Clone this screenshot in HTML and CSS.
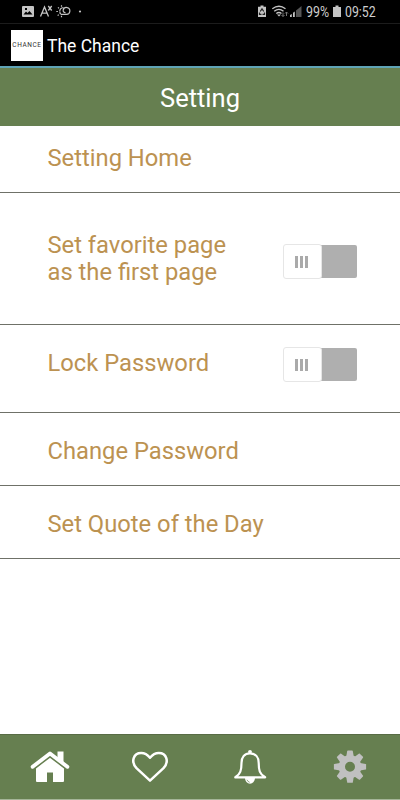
FILE: index.html
```html
<!DOCTYPE html>
<html lang="en">
<head>
<meta charset="utf-8">
<title>The Chance</title>
<link rel="stylesheet" href="styles.css">
</head>
<body>
<div class="status">
  <svg class="status-left" width="70" height="23" viewBox="0 0 70 23">
    <path fill="#c4c4c4" fill-rule="evenodd" d="M1 6h10q1 0 1 1v9q0 1-1 1H1q-1 0-1-1V7q0-1 1-1zM1.500 14.500h9L7.500 11 5.500 13 4 11.500zM3 8v2h2V8z"/>
    <path fill="none" stroke="#c4c4c4" stroke-width="1.300" d="M18.500 16.500L22.500 7l4 9.500M20 13.200h5M26.300 6l3.400 4.500M29.700 6l-3.400 4.500"/>
    <path fill="none" stroke="#c4c4c4" stroke-width="1.200" d="M41.500 7.800a3.200 3.200 0 0 0-3.700 3.500M39 14.300h5.500a3.400 3.400 0 1 0-3.300-4.300q-.4 2.500 2.300 2.600M39 14.300q-1.500-.8-1-2.600"/>
    <path fill="none" stroke="#c4c4c4" stroke-width="1.200" d="M34.300 11.500h1.600M36 7.300l1 1M39.500 5.300v1.400M35.700 15.700l1-1M39.500 15.800v1.400"/>
    <circle cx="58" cy="11.500" r="1.100" fill="#c4c4c4"/>
  </svg>
  <div class="status-right">
    <svg width="46" height="23" viewBox="0 0 46 23">
      <path fill="#c4c4c4" d="M2.500 5.500h3v1.300h2.500v10.200H0V6.800h2.500z"/>
      <path fill="none" stroke="#222" stroke-width="1.200" d="M2.200 11.500L4 8.800l1.800 2.700M1.500 12.500v1.800h2M6.500 12.500v1.800h-2"/>
      <path fill="none" stroke="#c4c4c4" stroke-width="1.400" d="M14.300 8.700q6.700-5 13.200 0M16.200 11.200q4.700-3.600 9.300 0M18.300 13.500q2.600-2 5.200 0"/>
      <path fill="#c4c4c4" d="M19 14.500h4L21 16.500z"/>
      <path fill="none" stroke="#777" stroke-width="1" d="M25 12.500v4M23.500 15l1.500 1.500 1.500-1.500M28.500 16v-4M27 13.500l1.500-1.500 1.500 1.500"/>
      <path fill="#c4c4c4" d="M32 17v-2l1.800-1v3zM35 17v-4.300l1.800-1.200V17z"/>
      <path fill="#555" d="M38 17V10.500l2.500-2V17zM40.500 17V8.500L43.500 6v11z"/>
    </svg>
    <span class="percent">99%</span>
    <svg width="8" height="23" viewBox="0 0 8 23"><path fill="#c4c4c4" d="M2.500 5.500h3V7H8v10H0V7h2.500z"/></svg>
    <span class="time">09:52</span>
  </div>
</div>
<div class="appbar">
  <div class="logo"><span>CHANCE</span></div>
  <span class="app-name">The Chance</span>
</div>
<header class="title"><span>Setting</span></header>
<main class="list">
  <div class="row home"><span class="label">Setting Home</span></div>
  <div class="row favorite"><span class="label">Set favorite page<br>as the first page</span><div class="switch"><div class="thumb"><i></i><i></i><i></i></div></div></div>
  <div class="row lock"><span class="label">Lock Password</span><div class="switch"><div class="thumb"><i></i><i></i><i></i></div></div></div>
  <div class="row change"><span class="label">Change Password</span></div>
  <div class="row quote"><span class="label">Set Quote of the Day</span></div>
</main>
<nav class="nav">
  <svg width="50" height="40" viewBox="0 0 50 40">
    <path fill="#fff" d="M25 10.500l14 11.500v13q0 1-1 1H28V26.500h-6V36H12q-1 0-1-1V22z"/>
    <path fill="none" stroke="#667f50" stroke-width="6" d="M6 22.500L25 8 44 22.500"/>
    <path fill="#fff" d="M32.500 5.500h6V17l-6-5z"/>
    <path fill="none" stroke="#fff" stroke-width="3.800" stroke-linecap="round" stroke-linejoin="round" d="M7.600 20.800L25 7.500l17.400 13.300"/>
  </svg>
  <svg width="50" height="40" viewBox="0 0 50 40"><path fill="none" stroke="#fff" stroke-width="2.500" stroke-linejoin="round" d="M25 34.600L11.500 22.200C5.500 15.500 8.500 7 16.200 7c4.800 0 7 2.500 8.800 4.700C26.800 9.500 29 7 33.800 7c7.700 0 10.700 8.500 4.700 15.200z"/></svg>
  <svg width="50" height="40" viewBox="0 0 50 40">
    <circle cx="25" cy="5.800" r="1.900" fill="#fff"/>
    <path fill="none" stroke="#fff" stroke-width="2.200" stroke-linejoin="round" d="M25 7.300c-5.500 0-8.500 4-8.500 9.700 0 7-1 11-6.200 14.300h29.900C34.500 28 33.700 24 33.700 17c0-5.700-3.200-9.700-8.700-9.700z"/>
    <path fill="#fff" d="M20 32h10a5 5.700 0 0 1-10 0z"/>
    <path fill="none" stroke="#667f50" stroke-width=".7" d="M22 33.800q.7 2 2.700 2.500"/>
  </svg>
  <svg width="50" height="40" viewBox="0 0 50 40">
    <g fill="#c0c0c0">
      <path id="tooth" d="M21 12l1.200-7q.1-.4.600-.4h4.400q.5 0 .6.400l1.200 7z"/>
      <use href="#tooth" transform="rotate(45 25 20.700)"/><use href="#tooth" transform="rotate(90 25 20.700)"/><use href="#tooth" transform="rotate(135 25 20.700)"/><use href="#tooth" transform="rotate(180 25 20.700)"/><use href="#tooth" transform="rotate(225 25 20.700)"/><use href="#tooth" transform="rotate(270 25 20.700)"/><use href="#tooth" transform="rotate(315 25 20.700)"/>
    </g>
    <circle cx="25" cy="20.700" r="8.200" fill="none" stroke="#c0c0c0" stroke-width="6.400"/>
  </svg>
</nav>
</body>
</html>
```
FILE: styles.css
```css
* { box-sizing: border-box; }
body {
  margin: 0;
  height: 800px;
  display: flex;
  flex-direction: column;
  overflow: hidden;
  background: #fff;
  font-family: Roboto, sans-serif;
}
svg { display: block; flex: none; }
.status {
  height: 24px;
  display: flex;
  justify-content: space-between;
  background: #000;
  border-bottom: 1px solid #1c1c1c;
  padding: 0 24px 0 22px;
}
.status-right {
  display: flex;
  color: #cfcfcf;
  font-size: 14px;
  line-height: 25px;
  white-space: nowrap;
}
.percent { width: 23px; margin: 0 4px 0 2px; transform: scaleX(.89); transform-origin: left; }
.time { width: 31px; margin-left: 4px; transform: scaleX(.88); transform-origin: left; }
.appbar {
  height: 44px;
  display: flex;
  align-items: center;
  gap: 4px;
  padding-left: 11px;
  background: #000;
  border-bottom: 2px solid #5fa3b5;
}
.logo {
  width: 32px;
  height: 31px;
  display: flex;
  align-items: center;
  justify-content: center;
  background: #fff;
  color: #333;
  font-size: 6.500px;
  letter-spacing: .6px;
}
.app-name { color: #fff; font-size: 17.500px; line-height: 22px; padding-top: 2px; white-space: nowrap; }
.title {
  height: 58px;
  display: flex;
  align-items: center;
  justify-content: center;
  padding-top: 2px;
  background: #667f50;
  color: #fff;
  font-size: 25.500px;
  line-height: 30px;
}
.list { flex: 1; }
.row {
  display: flex;
  justify-content: space-between;
  align-items: flex-start;
  padding: 0 43px 0 47.500px;
  border-bottom: 1px solid #6f7168;
}
.label {
  color: #bc9251;
  font-size: 23.750px;
  line-height: 27px;
  white-space: nowrap;
}
.home { height: 67px; padding-top: 19px; }
.favorite { height: 132px; padding-top: 39px; }
.lock { height: 88px; padding-top: 25px; }
.change { height: 73px; padding-top: 25px; }
.quote { height: 73px; padding-top: 25px; }
.switch {
  width: 74px;
  height: 33px;
  margin-top: 13px;
  border-radius: 2px;
  background: linear-gradient(90deg, #fff 35px, #afafaf 35px);
}
.lock .switch { margin-top: -2px; }
.thumb {
  width: 39px;
  height: 35px;
  margin-top: -1px;
  padding-right: 2px;
  display: flex;
  align-items: center;
  justify-content: center;
  gap: 2px;
  background: #fff;
  border: 1px solid #e6e6e6;
  border-radius: 3px;
}
.thumb i { width: 3px; height: 12px; background: #aaa; }
.nav {
  height: 66px;
  display: grid;
  grid-template-columns: repeat(4, 1fr);
  justify-items: center;
  padding-top: 11px;
  background: #667f50;
  border-top: 1px solid #586c45;
  border-bottom: 1px solid #a5b598;
}
```
